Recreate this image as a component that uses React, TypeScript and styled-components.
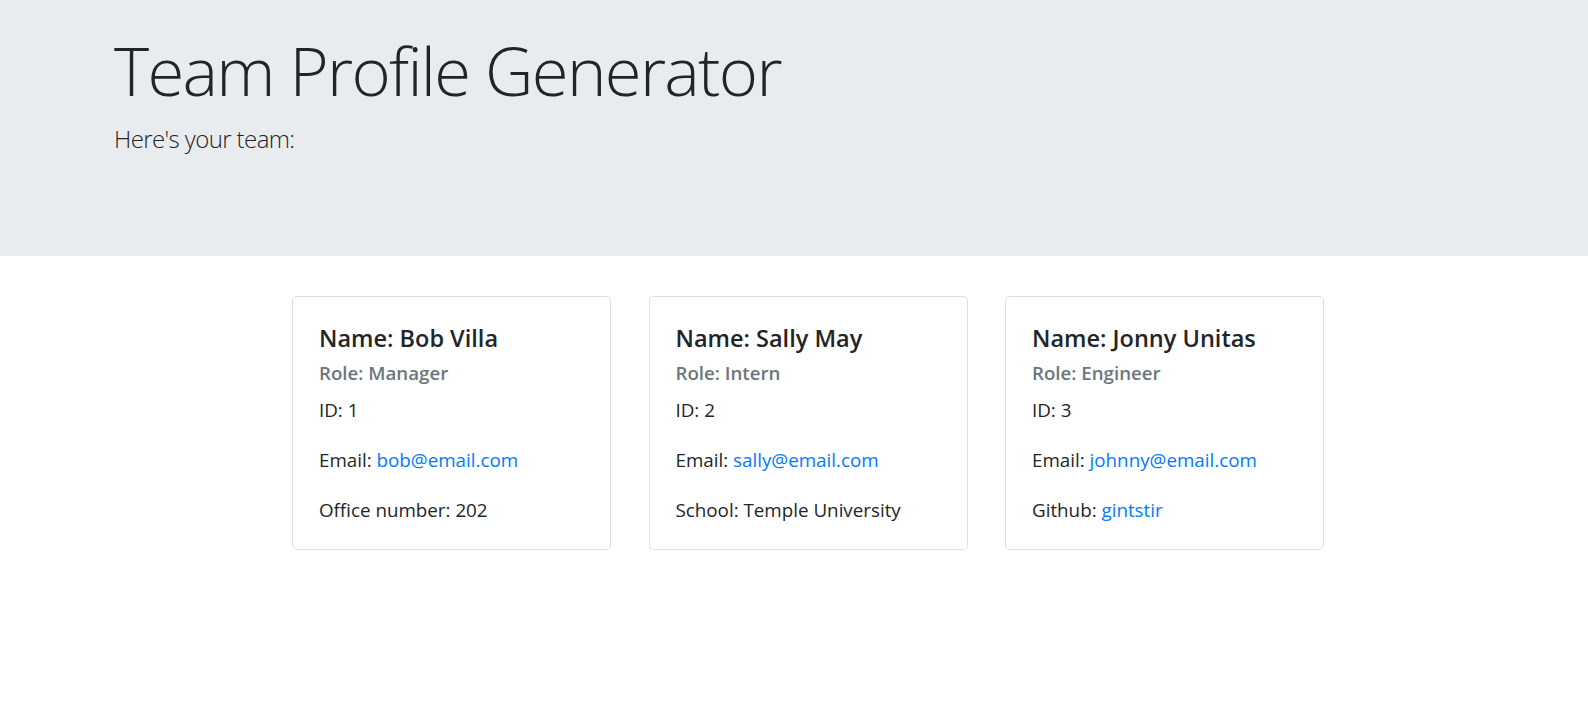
import React from "react";
import styled, { createGlobalStyle } from "styled-components";

const Global = createGlobalStyle`
  html, body { margin: 0; padding: 0; background: #fff; }
  body {
    font-family: "Open Sans", "Noto Sans", sans-serif;
    color: #212529;
    -webkit-font-smoothing: antialiased;
  }
  * { box-sizing: border-box; }
`;

const Jumbotron = styled.header`
  background: #e9ecef;
  padding: 28px 0 98px 114px;
`;

const Title = styled.h1`
  margin: 0 0 8px;
  font-size: 67px;
  font-weight: 300;
  line-height: 84px;
  letter-spacing: -1.7px;
  color: #212529;
`;

const Lead = styled.p`
  margin: 0;
  font-size: 24px;
  font-weight: 300;
  line-height: 37.5px;
  letter-spacing: -0.6px;
  color: #212529;
`;

const CardRow = styled.main`
  display: flex;
  justify-content: center;
  align-items: flex-start;
  gap: 37.5px;
  padding: 40px 0 0 28px;
`;

const Card = styled.section`
  width: 319px;
  border: 1px solid rgba(0, 0, 0, 0.125);
  border-radius: 5px;
  padding: 26px 25px 24px 26px;
  background: #fff;
`;

const CardTitle = styled.h5`
  margin: 0 0 8px;
  font-size: 23.5px;
  font-weight: 600;
  line-height: 30px;
  color: #212529;
`;

const CardSubtitle = styled.h6`
  margin: 0 0 10px;
  font-size: 18.7px;
  font-weight: 600;
  line-height: 24px;
  color: #6c757d;
`;

const CardText = styled.p`
  margin: 0 0 20px;
  font-size: 18.8px;
  line-height: 30px;
  color: #212529;
  &:last-child { margin-bottom: 0; }
`;

const Link = styled.a`
  color: #007bff;
  text-decoration: none;
`;

type Member = {
  name: string;
  role: string;
  id: number;
  email: string;
  extraLabel: string;
  extraValue: string;
  extraIsLink?: boolean;
};

const team: Member[] = [
  { name: "Bob Villa", role: "Manager", id: 1, email: "bob@email.com", extraLabel: "Office number", extraValue: "202" },
  { name: "Sally May", role: "Intern", id: 2, email: "sally@email.com", extraLabel: "School", extraValue: "Temple University" },
  { name: "Jonny Unitas", role: "Engineer", id: 3, email: "johnny@email.com", extraLabel: "Github", extraValue: "gintstir", extraIsLink: true },
];

export default function App() {
  return (
    <>
      <Global />
      <Jumbotron>
        <Title>Team Profile Generator</Title>
        <Lead>Here's your team:</Lead>
      </Jumbotron>
      <CardRow>
        {team.map((m) => (
          <Card key={m.id}>
            <CardTitle>Name: {m.name}</CardTitle>
            <CardSubtitle>Role: {m.role}</CardSubtitle>
            <CardText>ID: {m.id}</CardText>
            <CardText>
              Email: <Link href={`mailto:${m.email}`}>{m.email}</Link>
            </CardText>
            <CardText>
              {m.extraLabel}:{" "}
              {m.extraIsLink ? (
                <Link href={`https://github.com/${m.extraValue}`}>{m.extraValue}</Link>
              ) : (
                m.extraValue
              )}
            </CardText>
          </Card>
        ))}
      </CardRow>
    </>
  );
}
